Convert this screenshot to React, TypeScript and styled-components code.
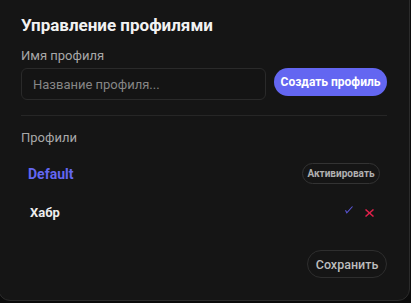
import React from 'react';
import styled, { createGlobalStyle } from 'styled-components';

const Global = createGlobalStyle`
  html, body { margin: 0; padding: 0; background: #0b0b0b; overflow: hidden; }
  body { font-family: Roboto, "Noto Sans", sans-serif; }
  * { box-sizing: border-box; }
`;

const Panel = styled.section`
  width: 412px;
  height: 322px;
  margin: -21px 0 0 -2px;
  padding: 34px 22px 0 22px;
  background: #151515;
  border: 1px solid #2b2b2b;
  border-radius: 12px;
  display: flex;
  flex-direction: column;
`;

const Title = styled.h2`
  margin: 0 0 11px;
  font-size: 17px;
  line-height: 22px;
  font-weight: 700;
  color: #f2f2f2;
`;

const Label = styled.div<{ $gap?: number }>`
  font-size: 13px;
  line-height: 18px;
  color: #a8a8a8;
  margin-bottom: ${(p) => p.$gap ?? 3}px;
`;

const InputRow = styled.div`
  display: flex;
  align-items: flex-start;
  gap: 8px;
`;

const Input = styled.input`
  flex: 1;
  height: 32px;
  padding: 0 11px;
  background: #141414;
  border: 1px solid #2a2a2a;
  border-radius: 6px;
  font-family: inherit;
  font-size: 13px;
  color: #ddd;
  outline: none;
  &::placeholder { color: #868686; }
`;

const PrimaryButton = styled.button`
  width: 113px;
  height: 28px;
  border: none;
  border-radius: 999px;
  background: #6366f1;
  color: #fff;
  font-family: inherit;
  font-size: 12px;
  font-weight: 700;
  padding: 0;
`;

const Divider = styled.hr`
  margin: 15px 0 13px;
  border: none;
  border-top: 1px solid #262626;
`;

const List = styled.div`
  margin-top: 7px;
  display: flex;
  flex-direction: column;
`;

const Row = styled.div`
  height: 39px;
  display: flex;
  align-items: center;
  justify-content: space-between;
  padding: 0 7px;
`;

const Name = styled.span<{ $active?: boolean }>`
  font-size: ${(p) => (p.$active ? 14 : 13)}px;
  font-weight: 700;
  margin-left: ${(p) => (p.$active ? 0 : 2)}px;
  color: ${(p) => (p.$active ? '#6366f1' : '#ececec')};
`;

const GhostButton = styled.button<{ $small?: boolean }>`
  height: ${(p) => (p.$small ? 21 : 28)}px;
  width: ${(p) => (p.$small ? 78 : 80)}px;
  padding: 0;
  background: transparent;
  border: 1px solid ${(p) => (p.$small ? '#333' : '#2e2e2e')};
  border-radius: 999px;
  color: ${(p) => (p.$small ? '#b0b0b0' : '#bdbdbd')};
  font-family: inherit;
  font-size: ${(p) => (p.$small ? 10 : 12.5)}px;
  font-weight: ${(p) => (p.$small ? 700 : 500)};
`;

const Actions = styled.div`
  display: flex;
  align-items: center;
  gap: 12px;
  margin-right: 6px;
`;

const IconButton = styled.span`
  display: inline-flex;
`;

const Footer = styled.div`
  display: flex;
  justify-content: flex-end;
  margin-top: 18px;
`;

export default function App() {
  return (
    <>
      <Global />
      <Panel>
        <Title>Управление профилями</Title>
        <Label>Имя профиля</Label>
        <InputRow>
          <Input placeholder="Название профиля..." />
          <PrimaryButton>Создать профиль</PrimaryButton>
        </InputRow>
        <Divider />
        <Label $gap={0}>Профили</Label>
        <List>
          <Row>
            <Name $active>Default</Name>
            <GhostButton $small>Активировать</GhostButton>
          </Row>
          <Row>
            <Name>Хабр</Name>
            <Actions>
              <IconButton>
                <svg width="8" height="8" viewBox="0 0 8 8" style={{ marginTop: -5 }}>
                  <path d="M0.5 4.2 L1.8 6.8 L7.5 0.5" fill="none" stroke="#5a55d6" strokeWidth="1.1" />
                </svg>
              </IconButton>
              <IconButton>
                <svg width="9" height="8" viewBox="0 0 9 8">
                  <path d="M0.5 0.5 L8.5 7.5 M8.5 0.5 L0.5 7.5" fill="none" stroke="#e0204a" strokeWidth="1.5" />
                </svg>
              </IconButton>
            </Actions>
          </Row>
        </List>
        <Footer>
          <GhostButton>Сохранить</GhostButton>
        </Footer>
      </Panel>
    </>
  );
}
